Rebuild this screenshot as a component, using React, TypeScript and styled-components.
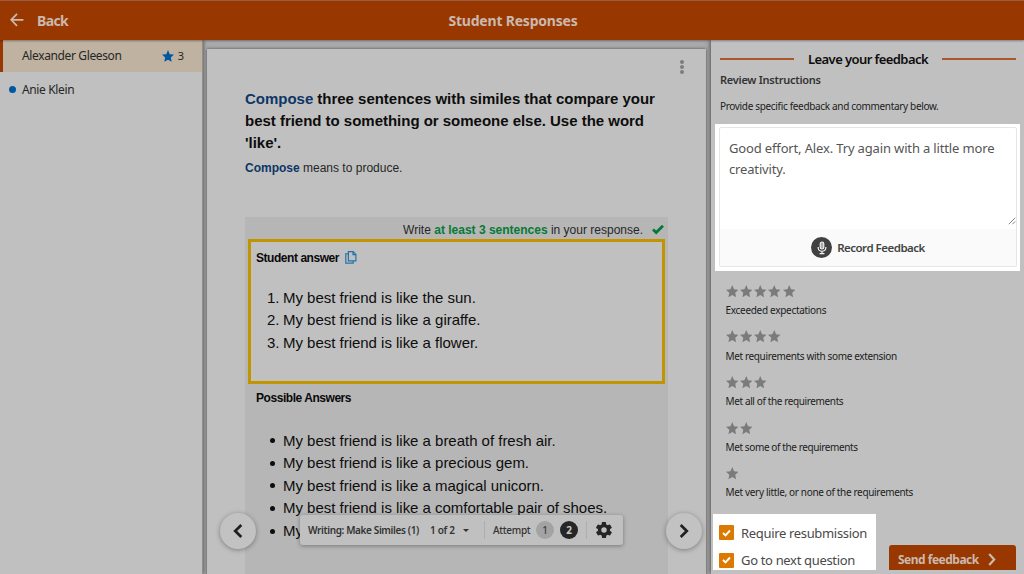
import React from 'react'
import styled, { createGlobalStyle } from 'styled-components'

const ui = '"Noto Sans", "Open Sans", sans-serif'
const doc = '"Liberation Sans", Arial, sans-serif'

const ratings = [
  { stars: 5, label: 'Exceeded expectations', spacing: -0.3 },
  { stars: 4, label: 'Met requirements with some extension', spacing: -0.36 },
  { stars: 3, label: 'Met all of the requirements', spacing: -0.38 },
  { stars: 2, label: 'Met some of the requirements', spacing: -0.39 },
  { stars: 1, label: 'Met very little, or none of the requirements', spacing: -0.34 },
]

const answers = ['My best friend is like the sun.', 'My best friend is like a giraffe.', 'My best friend is like a flower.']

const possible = [
  'My best friend is like a breath of fresh air.',
  'My best friend is like a precious gem.',
  'My best friend is like a magical unicorn.',
  'My best friend is like a comfortable pair of shoes.',
  'My',
]

const Star = ({ size, color }: { size: number; color: string }) => (
  <svg width={size} height={size} viewBox="0 0 24 24">
    <path d="M12 0l3.5 8.3 8.5.9-6.3 5.9 1.7 8.5L12 19.3l-7.4 4.3 1.7-8.5L0 9.2l8.5-.9z" fill={color} />
  </svg>
)

const App = () => {
  return (
    <Screen>
      <GlobalStyle />
      <Header>
        <BackButton>
          <svg width="14" height="14" viewBox="0 0 14 14" fill="none" stroke="#c9b9ae" strokeWidth="1.7">
            <path d="M13.4 6.8H1.2M7 0.8L1.2 6.8L7 12.8" />
          </svg>
          <span>Back</span>
        </BackButton>
        <Title>Student Responses</Title>
      </Header>
      <Columns>
        <Students>
          <Student $active>
            <Name>Alexander Gleeson</Name>
            <Star size={12} color="#0058a3" />
            <Count>3</Count>
          </Student>
          <Student>
            <Dot />
            <Name>Anie Klein</Name>
          </Student>
        </Students>

        <Main>
          <Card>
            <MoreButton>
              <i />
              <i />
              <i />
            </MoreButton>
            <Prompt>
              <b>Compose</b> three sentences with similes that compare your
              <br />
              best friend to something or someone else. Use the word
              <br />
              'like'.
            </Prompt>
            <Definition>
              <b>Compose</b> means to produce.
            </Definition>
            <Response>
              <Requirement>
                <span>
                  Write <b>at least 3 sentences</b> in your response.
                </span>
                <svg width="12" height="10" viewBox="0 0 12 10" fill="none" stroke="#047a35" strokeWidth="2.9">
                  <path d="M1 4.5L4.2 7.5L11 0.8" />
                </svg>
              </Requirement>
              <AnswerBox>
                <SmallHeading>
                  Student answer
                  <svg width="12" height="13" viewBox="0 0 12 13" fill="none" stroke="#2274a8" strokeWidth="1.2">
                    <path d="M3.4 0.7H8.2L10.9 3.4V9.9H3.4ZM8 0.9V3.7H10.8M3.2 2.9H0.8V12.2H8.2V10" />
                  </svg>
                </SmallHeading>
                <AnswerList>
                  {answers.map((text, i) => (
                    <Item key={text}>
                      <Marker>{i + 1}.</Marker>
                      {text}
                    </Item>
                  ))}
                </AnswerList>
              </AnswerBox>
              <PossibleHeading>Possible Answers</PossibleHeading>
              <PossibleList>
                {possible.map((text) => (
                  <Item key={text}>
                    <Bullet />
                    {text}
                  </Item>
                ))}
              </PossibleList>
            </Response>
          </Card>

          <NavButton $side="left">
            <svg width="10" height="14" viewBox="0 0 10 14" fill="none" stroke="#202020" strokeWidth="2.7">
              <path d="M8.3 1L2.2 7L8.3 13" />
            </svg>
          </NavButton>
          <NavButton $side="right">
            <svg width="10" height="14" viewBox="0 0 10 14" fill="none" stroke="#202020" strokeWidth="2.7">
              <path d="M1.7 1L7.8 7L1.7 13" />
            </svg>
          </NavButton>

          <Toolbar>
            <ToolText $width={122} $spacing={-0.37}>
              Writing: Make Similes (1)
            </ToolText>
            <ToolText $width={33} $spacing={-0.3}>
              1 of 2
            </ToolText>
            <Caret />
            <Divider $left={15} $right={8} />
            <ToolText $width={43} $spacing={-0.3} $light>
              Attempt
            </ToolText>
            <Attempt>1</Attempt>
            <Attempt $active>2</Attempt>
            <Divider $left={8} $right={9} />
            <svg width="16" height="16" viewBox="2 2 20 20">
              <path
                d="M19.4 13c0-.3.1-.6.1-1s0-.7-.1-1l2.1-1.6c.2-.2.3-.4.1-.7l-2-3.4c-.1-.2-.4-.3-.6-.2l-2.5 1c-.5-.4-1.1-.7-1.7-1l-.4-2.6c0-.3-.2-.5-.5-.5h-4c-.2 0-.4.2-.5.4L9 5.1c-.6.2-1.1.6-1.7 1l-2.5-1c-.2-.1-.5 0-.6.2l-2 3.4c-.1.3-.1.5.1.7L4.5 11c0 .3-.1.7-.1 1s0 .7.1 1l-2.1 1.6c-.2.2-.3.4-.1.7l2 3.4c.1.2.4.3.6.2l2.5-1c.5.4 1.1.7 1.7 1l.4 2.6c0 .3.2.5.5.5h4c.2 0 .4-.2.5-.4l.4-2.7c.6-.2 1.1-.6 1.7-1l2.5 1c.2.1.5 0 .6-.2l2-3.4c.1-.2.1-.5-.1-.7zM12 15.4a3.4 3.4 0 1 1 0-6.8 3.4 3.4 0 0 1 0 6.8z"
                fill="#262626"
              />
            </svg>
          </Toolbar>
        </Main>

        <Feedback>
          <FeedbackTitle>
            <Rule />
            <span>Leave your feedback</span>
            <Rule />
          </FeedbackTitle>
          <Instructions>Review Instructions</Instructions>
          <Hint>Provide specific feedback and commentary below.</Hint>
          <Spotlight>
            <Editor>
              <EditorText>
                Good effort, Alex. Try again with a little more
                <br />
                creativity.
                <Grip width="8" height="8" viewBox="0 0 8 8" stroke="#777" strokeWidth="0.9">
                  <path d="M0.8 7.2L7.2 0.8M4.4 7.2L7.2 4.4" />
                </Grip>
              </EditorText>
              <Record>
                <MicCircle>
                  <svg width="10" height="14" viewBox="0 0 10 14" fill="none" stroke="#f4f4f4">
                    <rect x="3.2" y="1" width="3.6" height="7" rx="1.8" strokeWidth="1.1" fill="#aaa" />
                    <path d="M1.2 6V7A3.8 3.3 0 0 0 8.8 7V6M5 10.3V12.6M2.6 12.7H7.4" strokeWidth="1.2" />
                  </svg>
                </MicCircle>
                <span>Record Feedback</span>
              </Record>
            </Editor>
          </Spotlight>
          <Ratings>
            {ratings.map((r) => (
              <Rating key={r.stars}>
                <Stars>
                  {Array.from({ length: r.stars }, (_, i) => (
                    <Star key={i} size={12.5} color="#7b7b7b" />
                  ))}
                </Stars>
                <RatingLabel $spacing={r.spacing}>{r.label}</RatingLabel>
              </Rating>
            ))}
          </Ratings>
          <Actions>
            <Options>
              <Option>
                <Check />
                <span>Require resubmission</span>
              </Option>
              <Option>
                <Check />
                <span>Go to next question</span>
              </Option>
            </Options>
            <SendButton>
              <span>Send feedback</span>
              <svg width="8" height="13" viewBox="0 0 8 13" fill="none" stroke="#c9b9ae" strokeWidth="2.2">
                <path d="M1.2 1L6.2 6.5L1.2 12" />
              </svg>
            </SendButton>
          </Actions>
        </Feedback>
      </Columns>
    </Screen>
  )
}

export default App

const Check = () => (
  <CheckBox>
    <svg width="9" height="8" viewBox="0 0 9 8" fill="none" stroke="#fff" strokeWidth="1.9">
      <path d="M1 4L3.5 6.3L8 1.5" />
    </svg>
  </CheckBox>
)

const GlobalStyle = createGlobalStyle`
  * {
    box-sizing: border-box;
  }
  body {
    margin: 0;
    overflow: hidden;
  }
  svg {
    display: block;
    flex: none;
  }
`

const Screen = styled.div`
  display: flex;
  flex-direction: column;
  width: 1024px;
  height: 574px;
  overflow: hidden;
  font-family: ${ui};
  white-space: nowrap;
  background: #c0c0c0;
`

const Header = styled.header`
  display: grid;
  grid-template-columns: 1fr auto 1fr;
  align-items: center;
  height: 40px;
  flex: none;
  padding: 0 0 1px 10px;
  background: #993700;
  border-top: 1px solid #995b42;
  color: #c9b9ae;
  font-weight: 700;
  z-index: 2;
  box-shadow: 0 1px 2px rgba(0, 0, 0, 0.35);
`

const BackButton = styled.div`
  display: flex;
  align-items: center;
  gap: 13px;
  font-size: 14px;
  letter-spacing: -0.6px;
`

const Title = styled.div`
  margin-left: -8px;
  font-size: 14px;
  letter-spacing: -0.2px;
`

const Columns = styled.div`
  display: flex;
  flex: 1;
  min-height: 0;
`

const Students = styled.aside`
  width: 203px;
  flex: none;
  z-index: 1;
  background: #c0c0c0;
  border-right: 1px solid #8f8f8f;
  box-shadow: 1px 0 3px rgba(0, 0, 0, 0.4);
`

const Student = styled.div<{ $active?: boolean }>`
  display: flex;
  align-items: center;
  height: ${({ $active }) => ($active ? 32 : 34)}px;
  padding: 0 18px ${({ $active }) => ($active ? '1px 19px' : '0 9px')};
  border-left: ${({ $active }) => ($active ? '3px solid #993700' : 'none')};
  background: ${({ $active }) => ($active ? '#bfb2a0' : 'transparent')};
  color: #262626;
  font-size: 12px;
`

const Name = styled.span`
  flex: 1;
  letter-spacing: -0.37px;
`

const Count = styled.span`
  margin-left: 4px;
  font-size: 11px;
`

const Dot = styled.i`
  width: 7px;
  height: 7px;
  margin-right: 6px;
  border-radius: 50%;
  background: #0058a3;
`

const Main = styled.main`
  position: relative;
  width: 508px;
  flex: none;
  padding: 9px 5px 0 4px;
  overflow: hidden;
  background: #a9a9a9;
`

const Card = styled.section`
  position: relative;
  height: 540px;
  padding: 38.6px 38px 0;
  background: #c0c0c0;
  box-shadow: 0 0 3px rgba(0, 0, 0, 0.55);
  font-family: ${doc};
`

const MoreButton = styled.div`
  position: absolute;
  top: 11px;
  right: 22px;
  display: flex;
  flex-direction: column;
  gap: 1px;

  i {
    width: 4px;
    height: 4px;
    border-radius: 50%;
    background: #7c7c7c;
  }
`

const Prompt = styled.h1`
  margin: 0;
  color: #0d0d0d;
  font-size: 15px;
  font-weight: 700;
  line-height: 22.3px;
  letter-spacing: -0.02px;

  b {
    color: #0d3666;
  }
`

const Definition = styled.p`
  margin: 4px 0 38.4px;
  color: #262626;
  font-size: 12px;
  line-height: 20px;

  b {
    color: #0d3666;
  }
`

const Response = styled.div`
  width: 423px;
  height: 400px;
  padding: 0 3px;
  background: #b6b6b6;
`

const Requirement = styled.div`
  display: flex;
  align-items: center;
  justify-content: flex-end;
  gap: 9px;
  height: 22px;
  padding: 4px 1px 0 0;
  color: #262626;
  font-size: 12px;

  b {
    color: #047a35;
  }
`

const AnswerBox = styled.div`
  width: 417px;
  height: 145px;
  padding: 6px 5px 0;
  border: 3px solid #c19500;
  background: #c0c0c0;
`

const SmallHeading = styled.div`
  display: flex;
  align-items: center;
  gap: 6px;
  height: 20px;
  color: #0a0a0a;
  font-size: 12px;
  font-weight: 700;
  letter-spacing: -0.45px;
`

const PossibleHeading = styled(SmallHeading)`
  margin: 4px 0 0 8px;
`

const AnswerList = styled.div`
  margin: 18px 0 0 11px;
`

const PossibleList = styled.div`
  margin: 21px 0 0 19px;
`

const Item = styled.div`
  display: flex;
  align-items: center;
  height: 22.6px;
  color: #0d0d0d;
  font-size: 15px;
  letter-spacing: -0.02px;
`

const Marker = styled.span`
  width: 16px;
`

const Bullet = styled.i`
  width: 5px;
  height: 5px;
  margin: 1px 8px 0 3px;
  border-radius: 50%;
  background: #0d0d0d;
`

const NavButton = styled.div<{ $side: 'left' | 'right' }>`
  position: absolute;
  top: 473px;
  left: ${({ $side }) => ($side === 'left' ? 17 : 463)}px;
  display: flex;
  align-items: center;
  justify-content: center;
  width: 36px;
  height: 36px;
  border-radius: 50%;
  background: #c2c2c2;
  box-shadow: 0 1px 5px rgba(0, 0, 0, 0.35);
`

const Toolbar = styled.div`
  position: absolute;
  top: 475px;
  left: 97px;
  display: flex;
  align-items: center;
  width: 323px;
  height: 30px;
  padding-left: 8px;
  border-radius: 3px;
  background: #c0c0c0;
  box-shadow: 0 1px 4px rgba(0, 0, 0, 0.35);
`

const ToolText = styled.span<{ $width: number; $spacing: number; $light?: boolean }>`
  width: ${({ $width }) => $width}px;
  flex: none;
  color: #333;
  font-size: 10px;
  font-weight: ${({ $light }) => ($light ? 500 : 600)};
  letter-spacing: ${({ $spacing }) => $spacing}px;
`

const Caret = styled.i`
  border: 3px solid transparent;
  border-top-color: #333;
  border-bottom: 0;
`

const Divider = styled.i<{ $left: number; $right: number }>`
  width: 1px;
  height: 18px;
  margin: 0 ${({ $right }) => $right}px 0 ${({ $left }) => $left}px;
  background: #aeaeae;
`

const Attempt = styled.span<{ $active?: boolean }>`
  display: flex;
  align-items: center;
  justify-content: center;
  width: 18px;
  height: 18px;
  margin-left: ${({ $active }) => ($active ? 6 : 0)}px;
  border-radius: 50%;
  background: ${({ $active }) => ($active ? '#262626' : '#a3a3a3')};
  color: ${({ $active }) => ($active ? '#c8c8c8' : '#404040')};
  font-size: 10px;
  font-weight: ${({ $active }) => ($active ? 700 : 500)};
`

const Feedback = styled.aside`
  flex: 1;
  min-width: 0;
  z-index: 1;
  background: #c0c0c0;
  box-shadow: -1px 0 4px rgba(0, 0, 0, 0.5);
`

const FeedbackTitle = styled.div`
  display: flex;
  align-items: center;
  justify-content: space-between;
  height: 20px;
  margin: 9px 8px 0 9px;
  color: #0d0d0d;
  font-size: 13px;
  font-weight: 600;
  letter-spacing: -0.58px;
`

const Rule = styled.i`
  width: 74px;
  height: 2px;
  background: #aa572e;
`

const Instructions = styled.div`
  margin: 1px 0 0 9px;
  color: #333;
  font-size: 11px;
  font-weight: 600;
  line-height: 20px;
  letter-spacing: -0.26px;
`

const Hint = styled.div`
  margin: 6px 0 0 9px;
  color: #202020;
  font-size: 10px;
  line-height: 20px;
  letter-spacing: -0.33px;
`

const Spotlight = styled.div`
  width: 305px;
  height: 147px;
  margin: 8px 0 0 4px;
  padding: 3px 3px 4px 4px;
  background: #fff;
`

const Editor = styled.div`
  height: 140px;
  border: 1px solid #e6e6e6;
  border-radius: 2px;
`

const EditorText = styled.div`
  position: relative;
  height: 101px;
  padding: 10px 9px;
  color: #555;
  font-size: 13px;
  line-height: 20.6px;
  letter-spacing: -0.15px;
`

const Grip = styled.svg`
  position: absolute;
  right: 0;
  bottom: 4px;
`

const Record = styled.div`
  display: flex;
  align-items: center;
  justify-content: center;
  gap: 5px;
  height: 37px;
  background: #fafafa;
  color: #444;
  font-size: 11.5px;
  font-weight: 600;
  letter-spacing: -0.5px;
`

const MicCircle = styled.i`
  display: flex;
  align-items: center;
  justify-content: center;
  width: 21px;
  height: 21px;
  border-radius: 50%;
  background: #414141;
`

const Ratings = styled.div`
  margin: 10px 0 0 14.5px;
`

const Rating = styled.div`
  height: 45.6px;
`

const Stars = styled.div`
  display: flex;
  align-items: center;
  gap: 1.8px;
  height: 20px;
`

const RatingLabel = styled.div<{ $spacing: number }>`
  color: #202020;
  font-size: 10px;
  line-height: 19px;
  letter-spacing: ${({ $spacing }) => $spacing}px;
`

const Actions = styled.div`
  display: flex;
  align-items: flex-end;
  justify-content: space-between;
  margin: 5px 8px 0 2px;
`

const Options = styled.div`
  width: 163px;
  height: 56px;
  padding: 5px 0 0 6px;
  background: #fff;
`

const Option = styled.div`
  display: flex;
  align-items: center;
  gap: 7px;
  height: 27.5px;
  color: #4a4a4a;
  font-size: 13px;
  letter-spacing: -0.33px;
`

const CheckBox = styled.i`
  display: flex;
  align-items: center;
  justify-content: center;
  width: 15px;
  height: 15px;
  border-radius: 1px;
  background: #dc7900;
`

const SendButton = styled.div`
  display: flex;
  align-items: center;
  gap: 9px;
  width: 127px;
  height: 25px;
  padding: 4px 0 0 9px;
  border-radius: 3px 3px 0 0;
  background: #993700;
  color: #c9b9ae;
  font-size: 12px;
  font-weight: 700;
  letter-spacing: -0.5px;
`
